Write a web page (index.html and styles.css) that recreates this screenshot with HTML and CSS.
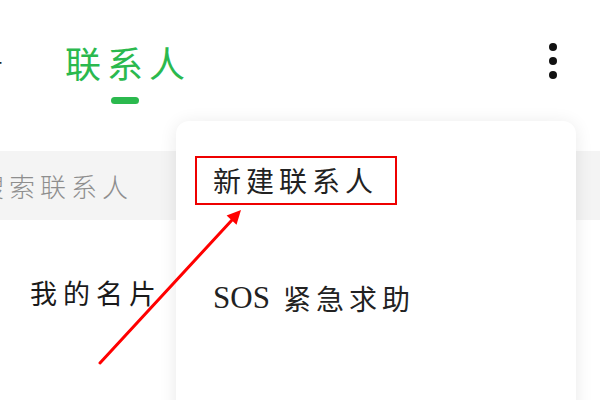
FILE: index.html
```html
<!DOCTYPE html>
<html lang="zh-CN">
<head>
<meta charset="utf-8">
<title>联系人</title>
<link rel="stylesheet" href="styles.css">
</head>
<body>
<div class="app">
  <header class="header">
    <nav class="tabs">
      <div class="tab tab-prev"><span class="tab-label">拨号</span></div>
      <div class="tab tab-active">
        <span class="tab-label">联系人</span>
        <span class="tab-indicator"></span>
      </div>
    </nav>
    <button class="more" aria-label="更多">
      <span class="dot"></span><span class="dot"></span><span class="dot"></span>
    </button>
  </header>

  <div class="search"><span class="search-text">搜索联系人</span></div>

  <ul class="list">
    <li class="list-item">我的名片</li>
  </ul>

  <div class="menu">
    <div class="menu-item"><span class="menu-mark">新建联系人</span></div>
    <div class="menu-item"><span class="latin">SOS</span> 紧急求助</div>
  </div>

  <svg class="arrow" width="600" height="400" viewBox="0 0 600 400">
    <line x1="100" y1="363" x2="232" y2="220" stroke="#ff0000" stroke-width="3" stroke-linecap="round"/>
    <polygon points="241,210 236.5,224.8 226.6,215.6" fill="#ff0000"/>
  </svg>
</div>
</body>
</html>
```

FILE: styles.css
```css
* { box-sizing: border-box; }

html, body {
  margin: 0;
  padding: 0;
  background: #ffffff;
}

body {
  width: 600px;
  height: 400px;
  overflow: hidden;
  font-family: "Liberation Serif", "Noto Sans CJK SC", serif;
  color: #222222;
}

.app {
  position: relative;
  width: 600px;
  height: 400px;
  overflow: hidden;
}

.header {
  display: flex;
  justify-content: space-between;
  align-items: flex-start;
  height: 151px;
  padding-top: 40px;
}

.tabs {
  display: flex;
  gap: 61px;
}

.tab {
  display: flex;
  flex-direction: column;
  align-items: center;
}

.tab-prev {
  margin-left: -74px;
}

.tab-label {
  font-family: "Noto Sans CJK SC", sans-serif;
  font-weight: 300;
  font-size: 36px;
  line-height: 44px;
  letter-spacing: 6px;
  margin-right: -6px;
  color: #222222;
}

.tab-active .tab-label {
  color: #2bb94e;
  font-weight: 400;
}

.tab-indicator {
  width: 28px;
  height: 7px;
  margin-top: 13px;
  border-radius: 4px;
  background: #2bb94e;
}

.more {
  display: flex;
  flex-direction: column;
  gap: 6px;
  margin: 3px 43px 0 0;
  padding: 0;
  border: 0;
  background: none;
}

.dot {
  width: 8px;
  height: 8px;
  border-radius: 50%;
  background: #111111;
}

.search {
  height: 69px;
  display: flex;
  align-items: center;
  background: #f4f4f4;
}

.search-text {
  margin-left: -22px;
  font-family: "Noto Sans CJK SC", sans-serif;
  font-weight: 300;
  font-size: 26px;
  letter-spacing: 5px;
  color: #8e8e8e;
}

.list {
  list-style: none;
  margin: 0;
  padding: 50px 0 0 30px;
}

.list-item {
  font-family: "Noto Sans CJK SC", sans-serif;
  font-weight: 400;
  font-size: 27px;
  line-height: 46px;
  letter-spacing: 6px;
  color: #1a1a1a;
}

.menu {
  position: absolute;
  left: 176px;
  top: 121px;
  width: 400px;
  height: 320px;
  background: #ffffff;
  border-radius: 13px;
  box-shadow: 0 2px 18px rgba(0, 0, 0, 0.09);
}

.menu-item {
  height: 118px;
  display: flex;
  align-items: center;
  padding-left: 37px;
  font-family: "Liberation Serif", "Noto Sans CJK SC", serif;
  font-weight: 400;
  font-size: 28px;
  letter-spacing: 5px;
  color: #222222;
  white-space: pre;
}

.latin {
  font-size: 31px;
  letter-spacing: 0;
  margin-right: 1px;
}

.menu-mark {
  margin-left: -18px;
  height: 49px;
  display: flex;
  align-items: center;
  padding: 0 17px 0 16px;
  border: 2px solid #ee0000;
}

.arrow {
  position: absolute;
  left: 0;
  top: 0;
  pointer-events: none;
}
```
